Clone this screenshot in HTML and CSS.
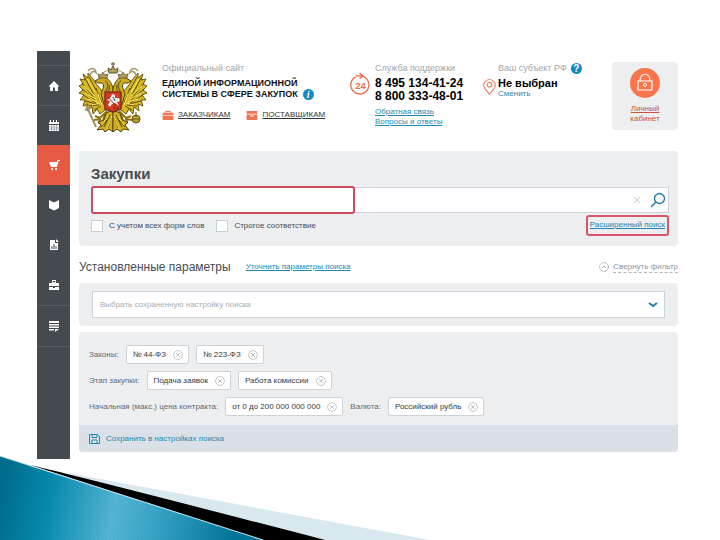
FILE: index.html
```
<!DOCTYPE html>
<html lang="ru">
<head>
<meta charset="utf-8">
<title>Закупки</title>
<link rel="stylesheet" href="styles.css">
</head>
<body>
<svg class="wave" viewBox="0 0 430 86" aria-hidden="true">
  <defs>
    <linearGradient id="sea" gradientUnits="userSpaceOnUse" x1="0" y1="50" x2="230" y2="95">
      <stop offset="0" stop-color="#006d8c"/><stop offset=".2" stop-color="#078bae"/><stop offset=".48" stop-color="#57b6d6"/><stop offset=".65" stop-color="#3ba6c9"/><stop offset="1" stop-color="#007699"/>
    </linearGradient>
    <pattern id="weave" width="4" height="4" patternUnits="userSpaceOnUse"><path d="M0 0l4 4" stroke="#00607f" stroke-width=".6" opacity=".25"/></pattern>
  </defs>
  <path d="M62 18L430 86H300z" fill="#d9e8ee"/>
  <path d="M30 11Q90 25 325 86H255Q130 43 30 11z" fill="#000"/>
  <path d="M0 2Q130 43 263 86H0z" fill="url(#sea)"/>
  <path d="M0 2Q130 43 263 86H0z" fill="url(#weave)"/>
  <path d="M0 2Q130 43 263 86" fill="none" stroke="#c4e3ec"/>
</svg>
<div class="page">
  <nav class="rail" aria-label="Разделы">
    <a href="#" class="ruled" aria-label="Главная"><svg viewBox="0 0 12 12"><path d="M6 1L.5 6.500H2V11h3V7.500h2V11h3V6.500h1.500z"/></svg></a>
    <a href="#" class="ruled" aria-label="Календарь"><svg viewBox="0 0 12 12"><path d="M1 2h1V0h1v2h2V0h1v2h2V0h1v2h2v2H1zM1 5h10v6H1z"/><path class="cut thin" d="M1 7h10M1 9h10M3.500 5v6M6 5v6M8.500 5v6"/></svg></a>
    <a href="#" class="active" aria-label="Закупки"><svg viewBox="0 0 12 12"><path d="M1 3h8l.6-2H12v1h-1.500L9 8H3z"/><circle cx="4" cy="10" r="1.100"/><circle cx="8" cy="10" r="1.100"/></svg></a>
    <a href="#" aria-label="Реестры"><svg viewBox="0 0 12 12"><path d="M1 1l2 1 3 1.500L9 2l2-1v8l-2 1-3 1.500L3 10 1 9z"/></svg></a>
    <a href="#" aria-label="Аналитика"><svg viewBox="0 0 12 12"><path d="M2 1h5v3h3v7H2z"/><path d="M8 0v3h3z"/><path class="cut" d="M4 10V7M6 10V5M8 10V7"/></svg></a>
    <a href="#" aria-label="Портфель"><svg viewBox="0 0 12 12"><path d="M1 4h3V1h4v3h3v3H1zM1 8h4v1h2V8h4v3H1z"/><path class="cut" d="M5 3.500V2.500h2v1"/></svg></a>
    <a href="#" class="ruled" aria-label="Документы"><svg viewBox="0 0 12 12"><path d="M1 1h10v2H1zM1 4h10v1.500H1zM1 6.500h10V8H1zM1 9h5v1.500H1zM7 9h4l-4 3z"/></svg></a>
  </nav>
  <main>
    <header>
      <svg class="emblem" viewBox="0 0 68 72" role="img" aria-label="Герб">
        <defs>
          <g id="wing">
            <path d="M30 24L24 30 18 23 14 17 9 11 9 16 4 12 6 18 1 17 4 22 0 24 4 28 0 31 5 33 1 38 6 38 4 44 9 42 8 49 13 45 14 52 18 47 21 52 26 48 33 46z" fill="#d6b827" stroke="#6c560b" stroke-width="1"/>
            <path d="M6 16l9 17M3 21l12 15M3 27l13 11M4 33l13 8M6 39l12 3M10 44l10-1M15 48l7-4M10 15l7 13M17 26l6 15" fill="none" stroke="#564308" stroke-width=".9"/>
            <path d="M8 17l8 13M5 24l11 10M6 31l11 6M9 37l10 3M13 43l8-2M19 32l4 11" fill="none" stroke="#f8e568"/>
            <path d="M34 46L34 26C31 17 27 14 21 16l-5 3 3 2 4 0c3 2 1 6-1 10l3 12z" fill="#cbab24" stroke="#594505"/>
            <path d="M26 19c4 2 3 6 1 10M30 23c1 3 0 5-1 7" fill="none" stroke="#594505"/>
            <path d="M20 16l-1-4 3 1 2-3 2 3 3-1-1 4z" fill="#ae9b59" stroke="#5c502b" stroke-width=".7"/>
            <path d="M11 13c1-4 5-5 7-1M9 9c3-4 7-3 8 1" fill="none" stroke="#a6976b" stroke-width="1.500"/>
            <path d="M28 49L20 57M27 50l-4 11M21 56l-5-2M21 56l-1 6M22 57l-7 1" fill="none" stroke="#927414" stroke-width="2"/>
            <path d="M34 48L27 51 25 58 19 60 22 63 18 68 24 67 26 70 30 67 34 70z" fill="#cfaf20" stroke="#584409"/>
            <path d="M31 53l-6 12M32 56l-3 10M28 58l-6 7" stroke="#584409"/>
            <path d="M33 54l-5 13M29 54l-6 9" stroke="#f5df58"/>
          </g>
        </defs>
        <use href="#wing"/><use href="#wing" transform="matrix(-1 0 0 1 68 0)"/>
        <path d="M7 43L17 65M6 48l6-3" fill="none" stroke="#a39466" stroke-width="2"/>
        <circle cx="57" cy="57" r="4" fill="#bfa332" stroke="#65520f"/><path d="M53 57h8M57 50v5" stroke="#6b5710"/>
        <path d="M24 11Q28 7 34 10Q40 7 44 11" fill="none" stroke="#a39673" stroke-width="1"/>
        <path d="M30 11l-1-5 3 2 2-4 2 4 3-2-1 5z" fill="#b5a262" stroke="#5c502b"/>
        <path d="M34 0v5M32 2h4" stroke="#81744d" stroke-width="1.300"/>
        <path d="M26 30h16v17l-8 3-8-3z" fill="#d33a22" stroke="#84301b" stroke-width="1.500"/>
        <path d="M29 43l2-4-3-1 4-3 1-3 3 1 0 3 4 0 1 3-3 1 2 4-4-3-3 1-2 3z" fill="#f2e9e5"/>
        <path d="M29 35l8 9M34 46h6" stroke="#5e2c26" stroke-width=".8"/><path d="M34 35l2 4" stroke="#426fa0" stroke-width="1.300"/>
      </svg>
      <section class="site">
        <p class="caption">Официальный сайт</p>
        <h1><span>ЕДИНОЙ ИНФОРМАЦИОННОЙ<br>СИСТЕМЫ В СФЕРЕ ЗАКУПОК</span><button class="info" aria-label="Информация"><i>i</i></button></h1>
        <div class="roles">
          <a href="#"><svg viewBox="0 0 12 10"><path d="M0 2h3V0h6v2h3v2.500H0zM0 5h12v5H0zM4 1v1h4V1z"/></svg><span>ЗАКАЗЧИКАМ</span></a>
          <a href="#"><svg viewBox="0 0 12 10"><path fill-rule="evenodd" d="M0 0h12v3H0zM0 4h12v6H0zM4 5v1h4V5z"/></svg><span>ПОСТАВЩИКАМ</span></a>
        </div>
      </section>
      <section class="contact">
        <svg class="clock" viewBox="0 0 22 24" aria-hidden="true"><path d="M6 4.500A9.500 9.500 0 1 0 11 3.500H6M10 .5l3.500 3-3.500 3" fill="none" stroke="#e66c4a" stroke-width="1.400"/><text x="11" y="17">24</text></svg>
        <div>
          <p class="caption">Служба поддержки</p>
          <p class="phones">8 495 134-41-24<br>8 800 333-48-01</p>
          <p class="links"><a href="#">Обратная связь</a><br><a href="#">Вопросы и ответы</a></p>
        </div>
      </section>
      <section class="region">
        <svg class="pin" viewBox="0 0 14 18" aria-hidden="true"><path d="M7 17L2 10.500A6 6 0 1 1 12 10.500z"/><circle cx="7" cy="6.500" r="2.500"/></svg>
        <div>
          <p class="caption">Ваш субъект РФ<button class="info" aria-label="Помощь">?</button></p>
          <p class="chosen">Не выбран</p>
          <a href="#" class="change">Сменить</a>
        </div>
      </section>
      <a href="#" class="account">
        <svg viewBox="0 0 30 30" aria-hidden="true"><circle cx="15" cy="15" r="15" fill="#fa744c"/><path d="M8 13h14v9H8zM10 13c0-9 10-9 10 0" fill="none" stroke="#fff" stroke-width="1.200"/><circle cx="15" cy="17" r="1.500" fill="none" stroke="#fff"/></svg>
        <span>Личный</span>
        <b>кабинет</b>
      </a>
    </header>

    <form class="panel search">
      <h2><label for="query">Закупки</label></h2>
      <div class="field">
        <input type="text" id="query">
        <button type="reset" aria-label="Очистить"><svg class="clear" viewBox="0 0 8 8"><path d="M1 1l6 6M7 1L1 7"/></svg></button>
        <button aria-label="Найти"><svg class="lens" viewBox="0 0 16 16"><circle cx="9.500" cy="6.500" r="5"/><path d="M6 10l-5 5"/></svg></button>
      </div>
      <div class="options">
        <label><input type="checkbox"><span>С учетом всех форм слов</span></label>
        <label><input type="checkbox"><span>Строгое соответствие</span></label>
        <a href="#">Расширенный поиск</a>
      </div>
    </form>

    <div class="heading">
      <h3>Установленные параметры</h3>
      <a href="#">Уточнить параметры поиска</a>
      <button><svg viewBox="0 0 10 10"><circle cx="5" cy="5" r="4.400" stroke-dasharray="3 1"/><path d="M3 6l2-2 2 2"/></svg><span>Свернуть фильтр</span></button>
    </div>

    <div class="panel saved">
      <select aria-label="Сохраненная настройка"><option>Выбрать сохраненную настройку поиска</option></select>
      <svg viewBox="0 0 10 6" aria-hidden="true"><path d="M1 1l4 3 4-3"/></svg>
    </div>

    <section class="panel filters">
      <div class="rows">
        <div class="row"><span>Законы:</span>
          <button>№ 44-ФЗ<svg viewBox="0 0 10 10"><circle cx="5" cy="5" r="4.400"/><path d="M3 3l4 4M7 3L3 7"/></svg></button>
          <button>№ 223-ФЗ<svg viewBox="0 0 10 10"><circle cx="5" cy="5" r="4.400"/><path d="M3 3l4 4M7 3L3 7"/></svg></button></div>
        <div class="row"><span>Этап закупки:</span>
          <button>Подача заявок<svg viewBox="0 0 10 10"><circle cx="5" cy="5" r="4.400"/><path d="M3 3l4 4M7 3L3 7"/></svg></button>
          <button>Работа комиссии<svg viewBox="0 0 10 10"><circle cx="5" cy="5" r="4.400"/><path d="M3 3l4 4M7 3L3 7"/></svg></button></div>
        <div class="row"><span>Начальная (макс.) цена контракта:</span>
          <button>от 0 до 200 000 000 000<svg viewBox="0 0 10 10"><circle cx="5" cy="5" r="4.400"/><path d="M3 3l4 4M7 3L3 7"/></svg></button>
          <span>Валюта:</span>
          <button>Российский рубль<svg viewBox="0 0 10 10"><circle cx="5" cy="5" r="4.400"/><path d="M3 3l4 4M7 3L3 7"/></svg></button></div>
      </div>
      <a href="#" class="save"><svg viewBox="0 0 11 10"><path d="M.5 .5h8l2 2v7H.5zM3 .5v3h5v-3M3 9.500V6h5v3.500"/></svg>Сохранить в настройках поиска</a>
    </section>
  </main>
</div>
</body>
</html>
```
FILE: styles.css
```
* { box-sizing: border-box; }
body { margin: 0; background: #fff; font-family: "Liberation Sans", Arial, sans-serif; font-size: 8px; line-height: 10px; color: #474d53; }
p, h1, h2, h3 { margin: 0; }
a { color: #2288b1; }
button { font: inherit; color: inherit; border: 0; padding: 0; background: none; }
svg { flex: none; display: block; }

.wave { position: absolute; left: 0; bottom: 0; width: 60%; }
.page { position: relative; display: flex; gap: 9px; padding: 51px 42px 80px 37px; }

.rail { width: 33px; min-height: 408px; padding-top: 14px; background: #434a50; display: flex; flex-direction: column; }
.rail a { height: 40px; display: grid; place-items: center; }
.rail .ruled { border-top: 1px solid #565e64; }
.rail a:last-child { height: 42px; border-bottom: 1px solid #565e64; }
.rail .active { background: #e65a44; }
.rail svg { width: 12px; height: 12px; fill: #fff; }
.rail .cut { fill: none; stroke: #434a50; stroke-width: 1; }
.rail .thin { opacity: .4; }

main { flex: 1; min-width: 0; }
header { display: flex; align-items: flex-start; height: 100px; padding-top: 11px; }
.emblem { width: 68px; height: 72px; margin-right: 15px; }
.caption { display: flex; align-items: center; gap: 4px; height: 12px; font-size: 9px; color: #a2a6aa; white-space: nowrap; }
.info { width: 11px; height: 11px; border-radius: 50%; background: #168ac0; color: #fff; font: bold 10px/11px "Liberation Sans", sans-serif; text-align: center; }
.info i { font-family: "Liberation Serif", serif; }
.site { width: 188px; }
.site h1 { display: flex; align-items: flex-end; gap: 5px; margin-top: 4px; font-size: 9px; line-height: 11px; color: #111; white-space: nowrap; }
.roles { display: flex; gap: 16px; margin-top: 10px; }
.roles a { display: flex; gap: 4px; align-items: center; color: #30363c; }
.roles svg { width: 12px; height: 9px; fill: #ee7654; }
.contact { display: flex; gap: 4px; width: 133px; }
.clock { width: 21px; height: 24px; margin-top: 10px; }
.clock text { font: bold 10px "Liberation Sans", sans-serif; text-anchor: middle; fill: #e66c4a; }
.phones { margin-top: 3px; font-size: 12px; line-height: 13px; font-weight: bold; color: #000; white-space: nowrap; }
.links { margin-top: 4px; white-space: nowrap; }
.region { display: flex; gap: 2px; }
.pin { width: 13px; height: 18px; margin-top: 16px; fill: none; stroke: #e5866c; stroke-width: 1.2; }
.chosen { margin-top: 3px; font-size: 11px; line-height: 12px; font-weight: bold; color: #000; }
.change { display: block; text-decoration: none; }
.account { width: 66px; height: 68px; margin-left: auto; padding-top: 6px; border-radius: 4px; background: #eceef0; display: flex; flex-direction: column; align-items: center; color: #c4583d; text-decoration: none; }
.account svg { width: 30px; height: 30px; margin-bottom: 6px; }
.account span { text-decoration: underline; }
.account b { font-weight: normal; }

.panel { border-radius: 4px; background: #eceef0; }
.search { height: 95px; padding: 14px 9px 0 12px; }
.search h2 { font-size: 15px; line-height: 18px; }
.field { display: flex; align-items: center; height: 26px; margin-top: 4px; padding-right: 2px; border: 1px solid #ccd2d8; background: #fff; }
.field input { width: 264px; height: 28px; margin: 0 auto 0 -1px; border: 2px solid #d04b5b; border-radius: 3px; background: #fff; outline: none; }
.field button { margin-left: 9px; }
.clear { width: 8px; height: 8px; stroke: #c9cbce; fill: none; }
.lens { width: 16px; height: 16px; stroke: #237ca5; stroke-width: 1.4; fill: none; }
.options { display: flex; align-items: center; gap: 12px; margin-top: 2px; }
.options label { display: flex; align-items: center; gap: 6px; }
.options input { appearance: none; width: 12px; height: 12px; margin: 0; border: 1px solid #c9ced3; background: #fff; }
.options a { margin-left: auto; padding: 3px 2px 4px; border: 2px solid #d9566a; border-radius: 3px; }

.heading { display: flex; align-items: center; gap: 15px; height: 37px; padding-top: 5px; }
.heading h3 { font-size: 12px; font-weight: normal; }
.heading button { display: flex; align-items: center; gap: 4px; margin-left: auto; color: #8e9399; }
.heading button span { border-bottom: 1px dashed #b2b5b9; }
.heading button svg { width: 10px; height: 10px; stroke: #a8acb0; fill: none; }

.saved { position: relative; padding: 8px 13px; }
.saved select { appearance: none; display: block; width: 100%; height: 27px; padding: 0 7px; border: 1px solid #ccd2d8; border-radius: 0; background: #fff; font: inherit; color: #a9adb1; }
.saved svg { position: absolute; right: 20px; top: 19px; width: 10px; height: 6px; stroke: #237ca5; stroke-width: 2; fill: none; }

.filters { margin-top: 6px; overflow: hidden; }
.rows { display: flex; flex-direction: column; gap: 7px; padding: 13px 10px 9px; }
.row { display: flex; align-items: center; gap: 7px; color: #656a70; white-space: nowrap; }
.row button { display: flex; align-items: center; gap: 7px; height: 19px; padding: 0 5px 0 6px; border: 1px solid #cdd2d6; border-radius: 2px; background: #fff; color: #343a41; }
.row button svg { width: 10px; height: 10px; stroke: #b5b9bd; stroke-width: .8; fill: none; }
.save { display: flex; align-items: center; gap: 6px; height: 27px; padding-left: 10px; background: #dae0e7; text-decoration: none; }
.save svg { width: 11px; height: 10px; stroke: #2288b1; fill: none; }
```
